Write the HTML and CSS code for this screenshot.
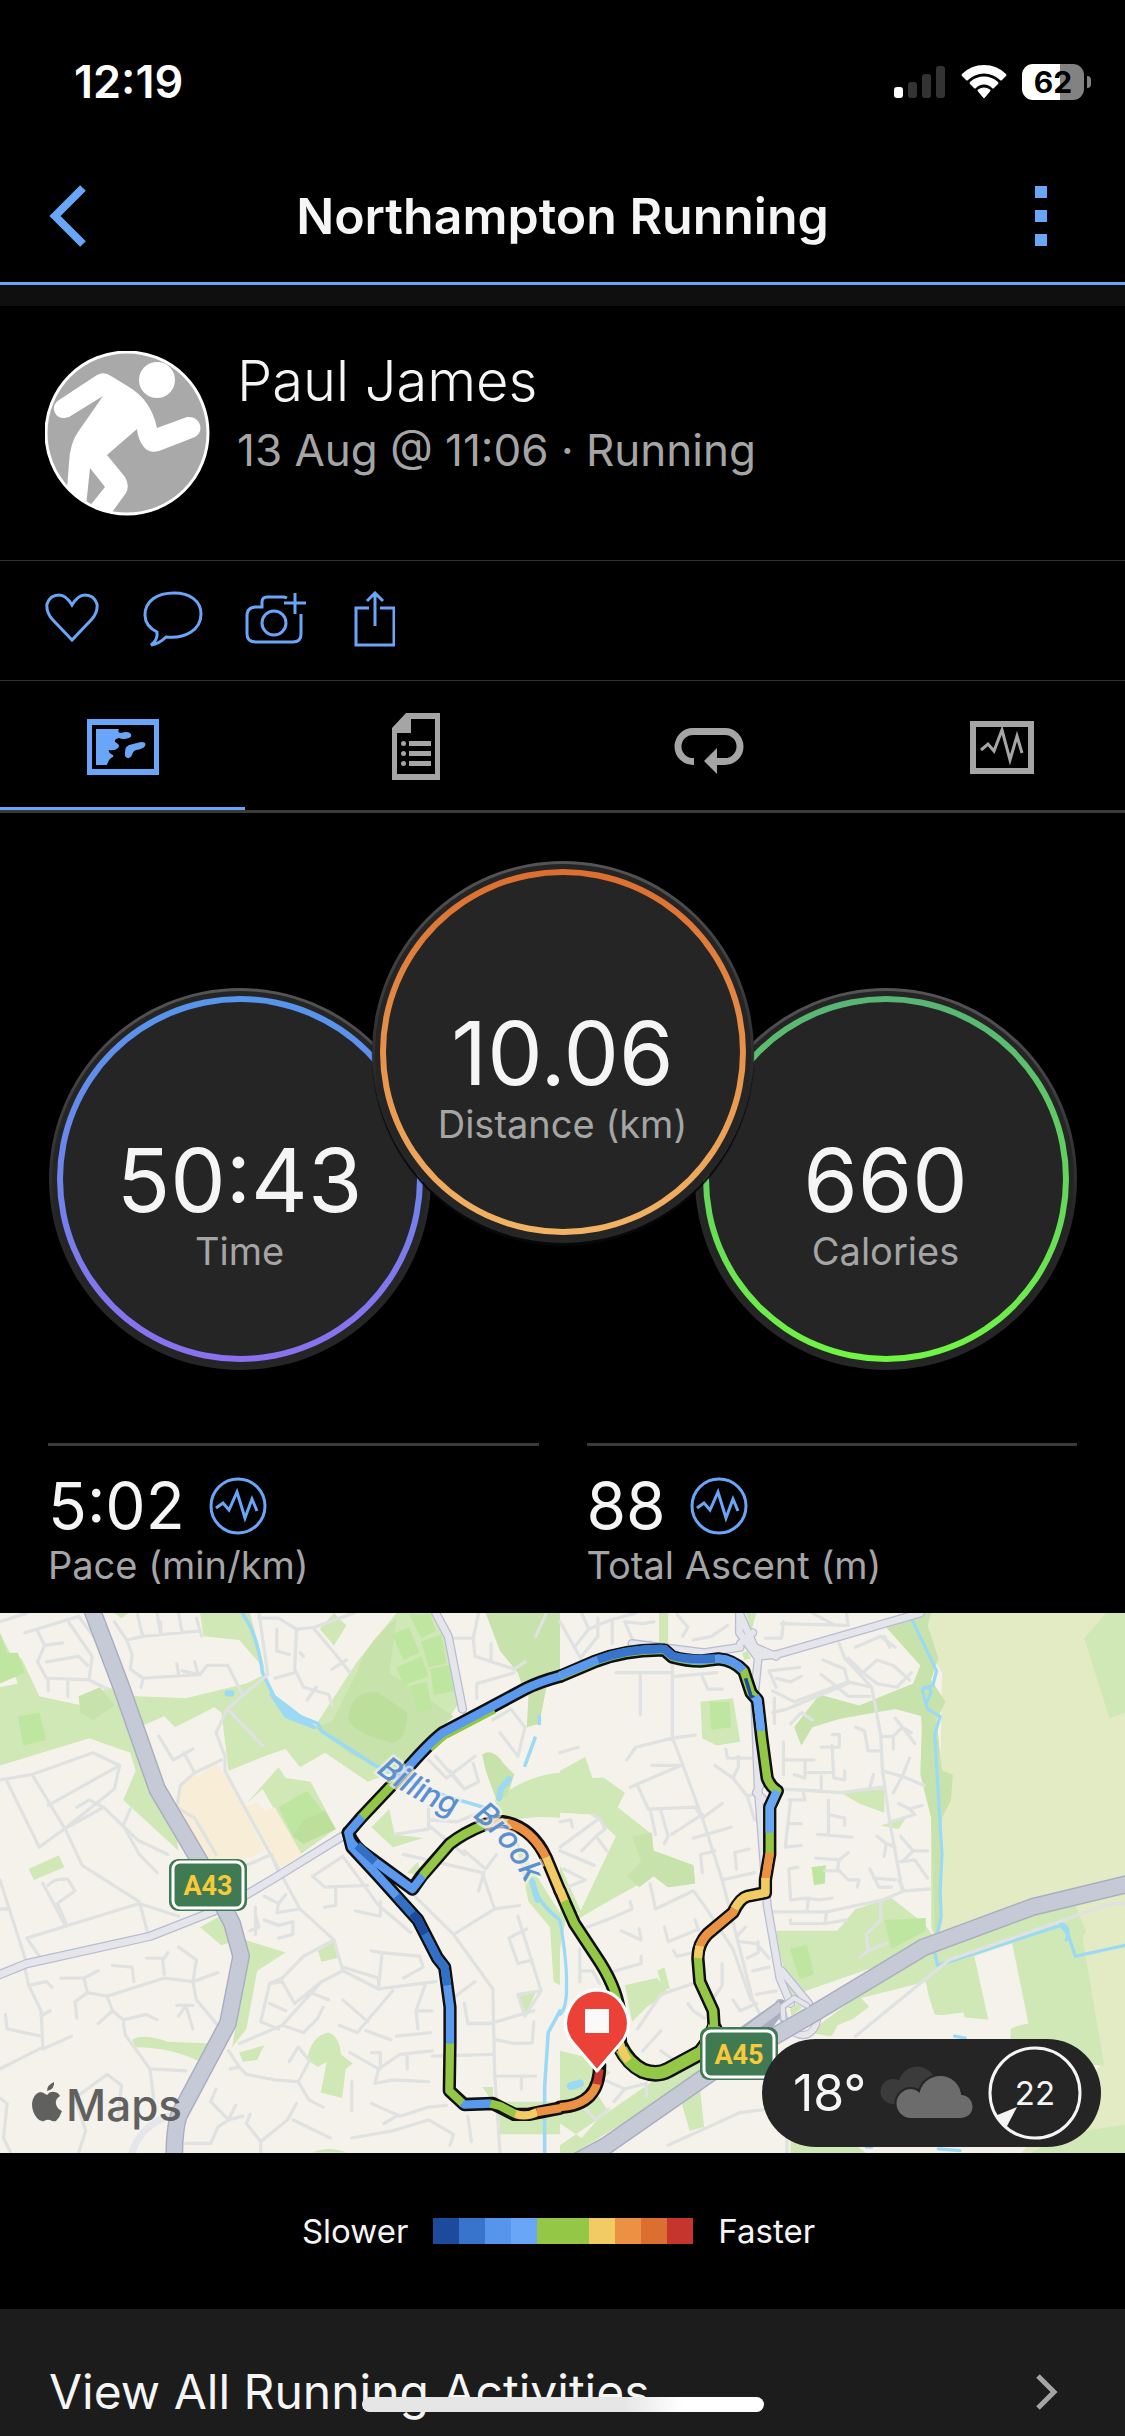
FILE: index.html
```html
<!DOCTYPE html>
<html lang="en">
<head>
<meta charset="utf-8">
<meta name="viewport" content="width=device-width, initial-scale=1">
<title>Northampton Running</title>
<link rel="stylesheet" href="styles.css">
</head>
<body>
<div class="status">
  <span class="clock">12:19</span>
  <div class="status-icons">
    <svg width="52" height="34" viewBox="0 0 52 34" aria-hidden="true"><rect y="22" width="9" height="11" rx="3" fill="#fff"/><g fill="#333"><rect x="14" y="17" width="9" height="16" rx="3"/><rect x="28" y="9" width="9" height="24" rx="3"/><rect x="42" y="1" width="9" height="32" rx="3"/></g></svg>
    <svg width="46" height="34" viewBox="0 0 46 34" fill="#fff" aria-hidden="true"><path d="M1 11 Q0 10 1 9 Q10 0 23 0 Q36 0 45 9 Q46 10 45 11 L41 15 Q40 16 39 15 Q32 8.500 23 8.500 Q14 8.500 7 15 Q6 16 5 15Z"/><path d="M9 19 Q8 18 9 17 Q15 11.500 23 11.500 Q31 11.500 37 17 Q38 18 37 19 L33 23 Q32 24 31 23 Q28 19.500 23 19.500 Q18 19.500 15 23 Q14 24 13 23Z"/><path d="M17 26.500 Q16 25.500 17 24.500 Q20 22.500 23 22.500 Q26 22.500 29 24.500 Q30 25.500 29 26.500 L23.500 33 Q23 33.500 22.500 33Z"/></svg>
    <div class="battery"><span class="battery-level">62</span></div>
  </div>
</div>

<header class="topbar">
  <button class="icon-button" aria-label="Back"><svg width="38" height="62" viewBox="0 0 38 62"><path d="M35 3 L7 31 L35 59" fill="none" stroke="#6aa6f8" stroke-width="8"/></svg></button>
  <h1>Northampton Running</h1>
  <button class="icon-button menu" aria-label="More options"><svg width="12" height="60" viewBox="0 0 12 60" fill="#6aa6f8"><path d="M0 0h12v12H0zM0 24h12v12H0zM0 48h12v12H0z"/></svg></button>
</header>
<div class="strip"></div>

<main>
<section class="profile">
  <svg class="avatar" viewBox="0 0 165 165" aria-hidden="true">
    <defs><clipPath id="disc"><circle cx="82" cy="82" r="80"/></clipPath></defs>
    <circle cx="82" cy="82" r="81" fill="#a9a9a9"/>
    <g clip-path="url(#disc)" fill="#fff">
      <ellipse cx="112" cy="29" rx="18" ry="18"/>
      <path d="M52 24Q59 20 66 25L84 36Q106 49 112 77L142 66Q152 65 155 74Q157 82 150 86L114 100Q104 103 98 95Q93 88 92 78L62 104L80 126Q85 134 81 142L62 168L44 156L60 136L45 117L40 165H20L24 112Q25 92 33 81L58 45L24 66Q12 70 9 59Q8 53 14 49Z"/>
    </g>
    <circle cx="82" cy="82" r="81" fill="none" stroke="#fff" stroke-width="3"/>
  </svg>
  <div class="who"><h2>Paul James</h2><p>13 Aug @ 11:06 · Running</p></div>
</section>

<div class="actions">
  <button aria-label="Like"><svg width="56" height="56" viewBox="0 0 56 56"><path d="M27 49 L7 28 Q1 21 2 13 Q5 4 14 4 Q21 4 27 14 Q33 4 40 4 Q49 4 52 13 Q53 21 47 28Z"/></svg></button>
  <button aria-label="Comment"><svg width="60" height="56" viewBox="0 0 60 56"><path d="M14 41 Q2 35 2 24 C2 10 14 2 31 2 C47 2 58 10 58 23 C58 39 42 48 23 46 Q16 53 8 54 Q15 49 14 41Z"/></svg></button>
  <button aria-label="Add photo"><svg width="66" height="56" viewBox="0 0 66 56"><path d="M42 7 Q40 6 38 6 H22 Q17 6 17 11 V16 H11 Q2 16 2 25 V43 Q2 51 11 51 H48 Q56 51 56 43 V23"/><circle cx="29" cy="32" r="12"/><path d="M50 2 V23 M39 12 H61"/></svg></button>
  <button aria-label="Share"><svg width="42" height="56" viewBox="0 0 42 56"><path d="M16 17 H3 V54 H41 V17 H27 M22 2 V35 M14 10 L22 2 L30 10"/></svg></button>
</div>

<nav class="tabs">
  <button class="tab active" aria-label="Map"><svg width="72" height="68" viewBox="0 0 72 68" fill="#6aa6f8"><path d="M0 6H72V62H0ZM5 12V56H67V12Z" fill-rule="evenodd"/><path d="M9 16H32Q30 20 34 20Q40 18 43 20Q46 23 42 25Q36 27 32 25Q27 26 28 29Q34 32 31 35Q28 38 22 37Q21 39 24 41Q29 43 24 45Q21 47 20 52H9Z"/><path d="M38 40Q37 32 46 31L54 29Q60 29 58 33Q56 36 49 37Q46 38 45 42Q42 48 38 43Z"/></svg></button>
  <button class="tab" aria-label="Details"><svg width="50" height="68" viewBox="0 0 50 68" fill="#a5a5a5"><path d="M15 0H49V67H1V15ZM20 6V20H6V61H44V6Z" fill-rule="evenodd"/><path d="M18 28h22v5H18zM18 38h22v5H18zM18 48h22v5H18z"/><circle cx="12.500" cy="30.500" r="2.500"/><circle cx="12.500" cy="40.500" r="2.500"/><circle cx="12.500" cy="50.500" r="2.500"/></svg></button>
  <button class="tab" aria-label="Laps"><svg width="70" height="68" viewBox="0 0 70 68"><path d="M20 48.500H19A15 15 0 0 1 19 18.500H51A15 15 0 0 1 51 48.500H41" fill="none" stroke="#a5a5a5" stroke-width="7"/><path d="M30 48L43 35V61Z" fill="#a5a5a5"/></svg></button>
  <button class="tab" aria-label="Charts"><svg width="64" height="68" viewBox="0 0 64 68" fill="none" stroke="#a5a5a5"><rect x="3" y="11" width="58" height="47" stroke-width="6"/><path d="M11 37L18 31L24 38L32 17L40 47L47 23L52 40" stroke-width="3"/></svg></button>
</nav>

<section class="rings">
  <div class="dial time"><div class="ring"><strong>50:43</strong><span>Time</span></div></div>
  <div class="dial distance"><div class="ring"><strong>10.06</strong><span>Distance (km)</span></div></div>
  <div class="dial calories"><div class="ring"><strong>660</strong><span>Calories</span></div></div>
</section>

<section class="stats">
  <div class="stat"><div class="stat-value"><strong>5:02</strong><button aria-label="Pace chart"><svg width="58" height="58" viewBox="0 0 58 58" fill="none" stroke="#6aa6f8" stroke-width="3"><circle cx="29" cy="29" r="27"/><path d="M7 31L14 26L20 33L28 15L36 41L43 22L48 34"/></svg></button></div><p>Pace (min/km)</p></div>
  <div class="stat"><div class="stat-value"><strong>88</strong><button aria-label="Ascent chart"><svg width="58" height="58" viewBox="0 0 58 58" fill="none" stroke="#6aa6f8" stroke-width="3"><circle cx="29" cy="29" r="27"/><path d="M7 31L14 26L20 33L28 15L36 41L43 22L48 34"/></svg></button></div><p>Total Ascent (m)</p></div>
</section>

<section class="map">
<svg class="map-canvas" viewBox="0 0 1125 540" role="img" aria-label="Route map">
  <defs><path id="brook1" d="M376 159 Q410 188 462 206"/><path id="brook2" d="M472 204 Q508 230 532 284"/></defs>
  <rect width="1125" height="540" fill="#f5f2eb"/>
  <!-- western half -->
  <g transform="matrix(.35714 0 0 .36352 0 -13)" stroke-linejoin="round" stroke-linecap="round">
    <g fill="#cfe8b5">
      <path d="M0 90L30 150L60 160L110 265L230 290L300 240L380 265L520 270L690 230L750 200L670 110L570 100L560 36H700L760 260L880 350L1000 170L1110 36H1220L1300 260L1240 350L1110 470L1030 500L910 420L840 460L800 410L740 430L640 470L620 310L600 295L490 350L460 320L400 345L420 420L480 560L500 690L345 550L380 470L365 420L250 380L0 455V240L50 230Z"/>
      <path d="M320 36H360L340 50ZM895 80L935 36L970 70L935 125ZM80 740L165 702L180 735L95 770ZM690 560L780 460L800 490L870 500L940 630L840 700L735 520ZM560 900L615 870L650 940L620 950ZM670 930L800 970L720 1020L690 1180L650 1230L690 1000ZM370 1210Q400 1190 470 1215L590 1220L560 1270Q480 1230 380 1230ZM530 1310L570 1290L500 1400ZM670 1245L740 1225L720 1265L680 1270ZM860 1265Q870 1200 920 1190Q950 1200 955 1250L988 1275L968 1290L958 1370L898 1355L915 1270L890 1285ZM890 965L935 940L945 985L900 995ZM875 1520Q920 1500 970 1520ZM1040 625L1090 575L1105 645L1185 655L1100 680ZM1140 750L1170 720L1180 760ZM1450 1090L1500 1080L1470 1145ZM1395 1380H1568V1470H1400ZM1350 1340H1380V1380Z"/>
      <path d="M1385 550Q1480 480 1568 475V600Q1500 590 1410 610ZM1440 650Q1500 760 1568 860V1060L1550 1050L1540 900L1480 830Z"/>
    </g>
    <g fill="#c7e2ab">
      <path d="M1000 200Q1020 120 1110 50L1090 200L1270 320L1100 470L990 430L880 350L930 335ZM1360 36H1568V220L1470 260L1450 200L1400 140ZM220 265L280 240L320 290L260 330L225 310ZM1480 260L1530 240L1510 340L1475 350ZM1350 425Q1380 405 1410 450L1440 480L1420 540L1390 550L1360 470Z"/>
    </g>
    <g fill="#bfe6a0"><path d="M0 90L20 145L50 145L70 200L0 230ZM50 320L110 310L130 385L65 400ZM1098 95L1145 75L1175 145L1130 165ZM1145 40H1205L1220 85L1180 105ZM1180 115L1235 95L1250 175L1200 185ZM1110 185L1180 155L1200 210L1130 235ZM1150 235L1195 225L1210 300L1170 308ZM1205 190L1260 178L1270 250L1215 262ZM780 570L860 525L940 630L850 670L820 650Z"/></g>
    <path d="M980 300Q1000 245 1060 255L1140 310Q1140 380 1100 393Q1000 370 975 330ZM850 605L910 580L940 630L850 670L820 650Z" fill="#bcdf9c"/>
    <g fill="#f8edd6"><path d="M500 510Q510 490 560 480L605 450L650 510L740 690L650 730L560 700L500 580ZM690 570L720 555L740 580L770 570L845 700L780 740Z"/></g>
    <g fill="none" stroke="#9bd9f5" stroke-width="10">
      <path d="M678 36Q720 90 735 200L770 270"/><path d="M760 260L800 320L880 350L840 320Z" fill="#9bd9f5"/><path d="M840 320L890 340L900 360L1050 455L1250 540L1370 575"/>
      <path d="M1510 320V340M1498 380L1470 455M1490 770Q1500 830 1568 880M1568 1130L1535 1190L1525 1340V1521"/><path d="M637 257H648M1425 493L1402 520L1398 545M1490 775L1505 825" stroke-width="17"/>
    </g>
    <g fill="none" stroke="#dfe2e1" stroke-width="9">
      <path d="M0 60L75 36M70 90L220 45L300 150M105 85L125 125L105 170L130 215L250 220L300 245M125 125L175 118M130 170L220 155L245 180M188 55L258 155L250 215M135 215V250M190 220V265"/>
      <path d="M320 60L355 110L400 100L560 85M355 110L370 150L365 190L400 215L560 205L580 180H638L680 262L750 205L725 36M385 40L400 100M440 36L450 95M500 36L510 90M550 50L565 100M400 220L395 240M495 175L500 205M545 170L555 205M510 195L560 205M450 60V90"/>
      <path d="M725 50L780 50L830 80L880 75L990 36M775 80V140L810 150M830 85L825 190L850 240L920 260L930 290M880 80L940 150L980 200M770 215L825 200M840 145L850 155M930 190L970 165M885 240L860 275"/>
      <path d="M637 300L735 400M680 262L637 300L605 365L630 430V470L690 580L780 740M445 375L485 440L540 410M515 420L545 475L620 440M545 475L505 510L495 570L545 600L605 700"/>
      <path d="M0 495L90 480L260 420L335 455L320 520L180 630L110 680L20 500M90 480L185 635L230 730L390 830L415 920M135 565L335 455M180 630L290 570L385 660L470 700M290 570L250 550L215 570M345 620L365 575M345 620L390 700L440 750M180 890L120 780M75 930L390 835L500 870M135 785Q150 765 190 768L210 800L160 835L185 890M0 770L75 1000M0 850L20 850M75 930L110 980M690 730L760 700L780 750"/>
      <path d="M790 760L840 850L935 935L960 1020L1060 1070L1220 1050M740 815L780 835L800 810M780 835L775 860L840 850M715 865L725 900L700 910M740 880L780 895L820 885M715 845V920M820 885V920L780 930M875 760L960 705L1060 840L1150 915M875 760L910 790L1030 785M940 790V840L910 845M995 855L1065 870V830"/>
      <path d="M1115 770L1270 920L1380 1070L1385 1300L1400 1521M1130 700L1350 750L1385 850L1270 920M1200 570V630L1105 645M1200 605L1280 610L1355 580M1220 430L1300 520L1340 500L1325 450M1200 440L1250 490L1330 430M1300 520L1260 470M1300 690L1360 740L1390 700M1355 750L1340 800M1385 850L1455 840M1450 870L1515 1075L1450 1085L1470 1145L1515 1075M1475 905L1425 930L1450 1000L1490 990M1300 700L1250 660L1200 620"/>
      <path d="M70 1015L80 1060L115 1130L120 1230L0 1290M80 1060L130 1050L145 1065M115 1145L140 1130M120 1235L200 1200M15 1140L20 1180L115 1200M170 1040H235L245 1080L210 1105L215 1150M245 1080L300 1090L460 1040L540 1050L610 1025M235 1040L275 1020M300 1090L315 1130L275 1165M315 1130L345 1155L410 1140L440 1155M345 1155L350 1195L420 1290L430 1370M420 1290L520 1295M315 1005L370 1010L375 1050M410 985L455 985L460 1030M460 985L470 970M500 955L550 990L540 1050L550 1100L610 1170M495 1115L540 1115M520 1115L500 1145M520 1115L540 1180"/>
      <path d="M960 1020L900 1050L790 1170L670 1220M935 935L850 980L790 1040L755 1055L730 1160L780 1180M755 1055L790 1050L825 1110L900 1050M755 1110L800 1130M870 1080L920 1100M790 1170L850 1190L890 1150L905 1120M960 1100L1030 1160M1060 1070V1040L960 1010M1040 965L1070 970L1175 980L1185 1010L1130 1040M1070 970L1060 1065M980 1245L1060 1290L1120 1250L1210 1240M1060 1290L1050 1330L1100 1320L1200 1325M1140 1250V1290M1040 1245H1065V1290M1110 1200L1205 1190M1025 1185L1095 1210M950 1170L1000 1190L1100 1075M1190 1060L1165 1130L1170 1180M1165 1130H1210"/>
      <path d="M640 1240L670 1285L690 1305L770 1320L835 1325L865 1375M670 1285L645 1290M810 1270L835 1230L865 1265M835 1325L865 1270M605 1345L590 1380L640 1430L610 1450L590 1495H520M640 1430L680 1420M660 1390L640 1430M690 1440L730 1490L805 1430L830 1385M690 1440L700 1415M730 1490V1521M820 1430L925 1480M865 1375L905 1395M985 1325L985 1405M1040 1385L1120 1420L1200 1395L1250 1390M985 1480L1100 1460L1200 1430L1270 1470L1260 1500M1110 1420L1075 1440M1310 1420L1320 1490M0 1370L20 1385L10 1480L30 1521M210 1370L300 1305L340 1335L330 1430M210 1370L240 1460L220 1521M1300 1110L1310 1165H1380M1385 1250L1210 1255M1330 1050L1275 1090M1385 1310H1500M1460 1310V1345M1390 1210L1440 1220L1490 1218L1495 1160M1390 1160L1495 1130"/>
      <path d="M1255 105H1325L1330 155L1440 190L1470 170M1325 105L1340 36M1375 120V170M1335 270V230L1440 200M1380 330L1430 300L1470 350L1450 430L1400 365M1530 36L1500 100"/>
    </g>
    <g fill="none" stroke="#babcd0" stroke-width="26"><path d="M0 1030L75 1000L420 925L640 840L785 755L975 640M1220 36L1255 100L1295 300" /></g>
    <g fill="none" stroke="#e5e5ec" stroke-width="19"><path d="M0 1030L75 1000L420 925L640 840L785 755L975 640M1220 36L1255 100L1295 300M370 1521Q390 1450 470 1420"/></g>
    <g fill="none" stroke="#a9adc2" stroke-width="50" stroke-linecap="butt"><path id="a43" d="M255 20L340 240L440 520L560 720L650 890L675 980L638 1165L500 1420Q488 1460 488 1530"/></g>
    <use href="#a43" fill="none" stroke="#c6cad6" stroke-width="42"/>
  </g>
  <!-- eastern half -->
  <g transform="matrix(.36033 0 0 .36352 560 -13)" stroke-linejoin="round" stroke-linecap="round">
    <path d="M970 36H1568V1521H1280L1500 1280L1040 1010L1055 500L1060 200Z" fill="#e2ebc3"/>
    <g fill="#cfe8b5">
      <path d="M0 470L70 432L90 490L120 488L180 530L160 570L250 640L260 690L370 730L375 780L300 790L260 760L150 820L45 880L155 650L90 590L0 585ZM390 280L480 270L500 390L435 400L395 380ZM0 730L60 860H20L0 960ZM720 260L800 295L930 270L1040 230V930L1030 900V600L1000 310L930 300L820 320L700 340L670 400L650 350L710 310ZM600 910L770 910L820 850L920 820L1010 890L1040 930L900 1000L640 1090L610 970ZM1060 920L1430 840L1460 910L1450 930L1510 1280H1250V1180L1295 1160L1250 940L1150 980L1190 1155L1040 1140L1010 1050L870 1110L750 1200L690 1190ZM180 1060L270 1040L300 1080L240 1120L200 1160ZM270 1020L290 1010L305 1070H285ZM275 36H300V130L275 120ZM0 1240L80 1260L140 1300L90 1340L130 1400L60 1480L0 1440ZM330 1360L385 1310L400 1450L360 1460ZM380 1240L0 1500V1521H40L420 1290ZM515 36H545L530 90ZM890 620L960 600L940 630ZM780 530L900 520V585L830 560Z"/>
      <path d="M1455 105L1515 36H1568V310L1525 325ZM1310 1521Q1400 1460 1568 1445V1521ZM640 1521V1480L820 1500L850 1521Z"/>
    </g>
    <g fill="#c7e2ab"><path d="M905 75L975 36H1030L1020 70L1050 160L1030 220L1070 280L1045 330L1060 470L1090 480L1085 550L1060 600L1055 900L1040 920L1030 600L1000 480L1005 320L930 300L800 320L700 350L670 400L650 350L720 260L830 290L980 230L1000 180ZM185 760L225 720L200 650L255 640L260 690L370 730L375 780L300 790L260 760L220 790Z"/></g>
    <g fill="#bfe6a0"><path d="M415 280H470L475 350L420 357ZM638 960L685 948L705 1030L665 1043ZM900 880L1015 875V910L920 960ZM698 735L738 730L735 780L705 785Z"/></g>
    <path d="M835 1095L1015 1050L1035 1145L1120 1135L1130 1175L1190 1160L1150 980L1255 945L1300 1165L1250 1175V1220H820L830 1150L755 1200L770 1170L870 1130Z" fill="#f5f2eb"/>
    <g fill="none" stroke="#9bd9f5" stroke-width="9">
      <path d="M975 50L1045 195L1035 235L1005 245L1020 300L1055 320L1040 370L1060 700L1055 800L1058 870L1045 930L1040 970L1048 1005L1390 895L1410 920L1430 980L1568 950M1010 240Q1045 235 1015 285M1390 890Q1420 900 1405 935M0 880Q20 1000 18 1060Q20 1120 0 1140M850 1505H865M1050 1510L1110 1515M1095 1200L1125 1205"/><path d="M30 1337L55 1330" stroke-width="22"/>
    </g>
    <g fill="none" stroke="#dfe2e1" stroke-width="9">
      <path d="M0 60L40 130L80 80L140 55L210 36M80 80L60 36M40 130L60 165M105 50V100L60 155M145 60V120M180 60L230 65L260 60M180 60L210 130L250 115M325 40L355 75L340 100M370 110L420 100L465 70M570 105H615L620 60M615 65L800 70L795 36M700 36L755 65"/>
      <path d="M155 200H310M223 200V315M312 170V380L330 425L395 600L450 770L535 1100L560 1150M320 210L435 200M395 210L410 245H450M185 440L210 405L312 380L375 372M195 515L335 455L255 455M215 510L245 575L375 570L395 600L450 560M250 575L265 645M280 580L300 650L290 670M310 645L395 590M370 655L475 625M0 420L50 405M460 410L465 435H530M495 430V460L480 490M430 455L480 490L520 540L550 530M520 540L540 605"/>
      <path d="M580 195L665 185M600 215L640 225L670 210M580 195L600 240M590 250L650 280L800 225L865 240M590 310L630 300L800 230L790 190L730 165M725 205L770 240L800 265H860M800 160L840 200L880 165L925 180L970 220M840 200L880 230L935 240L975 200M820 130L890 100L930 130M900 100L915 130M775 120L790 160L865 240L890 370L895 470L915 610L950 800M595 270V340M640 340L670 310L700 330"/>
      <path d="M620 390V480M620 440L705 440M680 440V490L650 480M690 475H755M755 400L760 490L790 495V470M725 485V525L620 520M755 370H775V405H725M820 350L845 360L855 415H890M895 375H925V410M925 375L950 350L985 395M930 325L950 350L975 365M895 470L950 485L970 435M950 485L1010 510M950 485L925 530M620 520L780 530L895 515M870 480L860 515M635 550H680L675 530M640 550L625 680M635 615H670M625 680L670 675M745 550V640M745 590L790 600V620M715 645L810 652M915 610L985 590L970 575L1005 565M940 560L970 575M880 650L905 670L900 705M905 670L930 680M945 650L980 690H1020M980 690L950 720M945 720L985 715L1020 765"/>
      <path d="M635 740L660 735M635 740L640 825L680 820L720 825L755 820M690 820L685 855M710 710L775 715L800 695M775 715L770 740L800 770H830L825 790M735 745L770 745M860 740L885 790L920 790M870 765L930 770M940 770L955 800L1025 795M590 858H740L895 825L955 800M740 858L735 890M640 880V890H735L795 880M890 830V880L850 920L855 965L830 985M855 965L905 945"/>
      <path d="M250 780L265 850L370 800L400 840L480 960L530 1100M290 900L300 940L385 905M385 910L375 880M170 910L225 935L220 905M120 1030L225 1000V980M315 965L325 980L370 970M450 1000V1060L430 1090M450 770L540 750M485 695L490 740M485 695L525 685M395 750L390 700L430 690M515 900L490 925M500 940L545 945L580 985M550 940V970L520 985M535 1020L580 1010M545 1085L600 1075M480 1100L500 1130L545 1110"/>
      <path d="M55 960V1050M55 1020H90L110 1055M75 900L130 880L200 850L195 830M0 690L95 730M0 610L30 605L35 625M0 680L110 600L125 630L100 650L60 690M105 600L90 590M100 650L130 690M10 740L70 770L20 790M215 1180L280 1085L400 1045M230 1240L280 1185M355 1110L370 1130L400 1150M280 1240L350 1290M100 1310L180 1345L240 1330V1365M180 1345L150 1380M70 1400L100 1430L135 1400M300 1500L500 1410L580 1400M630 1450V1521M820 1200L1080 990L1530 835H1568"/>
    </g>
    <g fill="none" stroke="#babcd0" stroke-width="25"><path id="eastroads" d="M498 30V90L550 160L540 260L550 520L575 840L610 1040L640 1110M500 120L535 90M550 155L600 150L760 105L1000 36M498 36L540 130L600 155M200 120L400 145L500 130M555 510L545 530L565 550M615 1020L690 1110M610 1110L620 1150"/></g>
    <use href="#eastroads" fill="none" stroke="#e5e5ec" stroke-width="18"/>
    <path d="M650 1190Q690 1210 710 1170L715 1150" fill="none" stroke="#babcd0" stroke-width="22"/>
    <path d="M650 1190Q690 1210 710 1170L715 1150" fill="none" stroke="#e5e5ec" stroke-width="16"/>
    <g fill="none" stroke="#a9adc2" stroke-width="50"><path id="a45" d="M0 1570L130 1500L420 1300L700 1140L1010 955L1310 845L1580 780"/><path d="M560 1190L615 1115L500 1195" stroke-width="32" stroke-linecap="butt"/></g>
    <use href="#a45" fill="none" stroke="#c6cad6" stroke-width="42"/>
    <path d="M500 1200L615 1116" stroke="#c6cad6" stroke-width="26" stroke-linecap="butt"/>
    <path d="M620 1150L618 1118L650 1095L685 1115" fill="none" stroke="#babcd0" stroke-width="18"/>
    <path d="M620 1150L618 1118L650 1095L685 1115" fill="none" stroke="#e5e5ec" stroke-width="12"/>
    <path d="M505 145L520 142L530 160L512 165ZM638 1125L660 1108L672 1122L642 1145Z" fill="#cfe8b5"/>
  </g>
  <!-- route outline -->
  <g transform="matrix(.35714 0 0 .36352 0 -13)" fill="none" stroke="#101010" stroke-width="37" stroke-linejoin="round" stroke-linecap="round">
    <path d="M1568 210Q1510 225 1470 245L1350 308L1240 365Q1200 395 1130 475L1010 600L975 640L985 680L1060 760L1170 880L1225 985L1245 1010L1260 1120V1220L1258 1350L1300 1388L1380 1385L1440 1415H1480L1568 1398"/>
    <path d="M975 640Q990 680 1030 705L1155 795L1180 760L1260 670Q1300 640 1350 620Q1380 608 1410 610Q1490 625 1530 710L1568 800"/>
  </g>
  <g transform="matrix(.36033 0 0 .36352 560 -13)" fill="none" stroke="#101010" stroke-width="37" stroke-linejoin="round" stroke-linecap="round">
    <path d="M0 210L100 168Q190 135 290 138L312 157Q350 168 390 168L440 162Q480 165 510 195L530 255L548 275L560 380L575 490Q585 515 603 525L582 570V700L575 740L570 770V805L520 815Q500 820 480 860L410 918Q380 950 383 990L388 1050L425 1130L428 1180"/>
    <path d="M428 1180Q420 1210 390 1245L300 1293Q270 1310 230 1295Q190 1275 165 1225" stroke-width="46"/>
    <path d="M0 800L40 890L100 980Q155 1060 165 1130L168 1220M0 1395Q110 1390 110 1280"/>
  </g>
  <!-- route pace colours -->
  <g transform="matrix(.35714 0 0 .36352 0 -13)" fill="none" stroke-width="23" stroke-linejoin="round">
    <path d="M1383 301L1243 373L1203 407" stroke="#93c745"/>
    <path d="M1570 209Q1510 225 1470 245L1350 308L1240 365Q1200 395 1130 475" stroke="#5b99ee" stroke-linecap="round"/>
    <path d="M1130 475L1010 600" stroke="#93c745"/>
    <path d="M1108 498L1150 452" stroke="#5b99ee"/>
    <path d="M1260 1222V1120L1245 1010L1225 985L1170 880L1060 760L985 680L975 640L1014 596" stroke="#5b99ee"/>
    <path d="M1110 815L1170 880L1225 985L1245 1010L1252 1060" stroke="#3270c8"/>
    <path d="M1155 862L1170 880L1190 918" stroke="#1c4a9c"/>
    <path d="M1260 1220L1258 1350L1296 1385" stroke="#93c745"/><path d="M1294 1384L1300 1388L1375 1385" stroke="#5b99ee"/><path d="M1373 1385L1400 1392L1445 1415" stroke="#93c745"/><path d="M1443 1414Q1475 1424 1505 1408" stroke="#f2cb64"/><path d="M1503 1409L1570 1398" stroke="#ec9144"/>
    <path d="M980 660Q990 680 1030 705L1155 795L1185 757" stroke="#5b99ee"/><path d="M1000 675L1050 720" stroke="#3270c8"/>
    <path d="M1183 758L1260 670Q1300 640 1355 619" stroke="#93c745"/><path d="M1353 620Q1380 607 1422 614" stroke="#e8c9a0"/><path d="M1420 613Q1490 630 1530 710" stroke="#ec9144"/><path d="M1529 708L1569 802" stroke="#f2cb64"/>
  </g>
  <g transform="matrix(.36033 0 0 .36352 560 -13)" fill="none" stroke-width="23" stroke-linejoin="round">
    <path d="M0 210L100 168Q190 135 290 138L312 157Q350 168 390 168L440 162Q480 165 510 195L530 255L548 275L560 380L575 490Q585 515 603 525L582 570V700L575 740L570 770V805L520 815Q500 820 480 860L410 918Q380 950 383 990L388 1050L425 1130L428 1180" stroke="#93c745"/>
    <path d="M0 208L100 166Q190 133 290 135L312 154Q350 165 390 166L440 161Q480 163 508 193" stroke="#5b99ee"/>
    <path d="M105 164Q190 133 290 135L312 154Q350 165 430 161" stroke="#3874cb"/>
    <path d="M515 215L530 265L548 272" stroke="#1c4a9c" stroke-width="10"/><path d="M541 265L548 275L558 360M602 525L582 570V640" stroke="#6aa6f8"/>
    <path d="M582 695L575 740L570 770" stroke="#ec9144"/><path d="M570 765V805L520 815Q500 820 484 850" stroke="#f2cb64"/><path d="M486 850L480 860L410 918Q392 936 386 958" stroke="#ec9144"/><path d="M387 952L383 985" stroke="#f2cb64"/>
    <path d="M428 1170Q420 1210 390 1245L300 1293Q270 1310 230 1295Q190 1275 170 1235" stroke="#93c745" stroke-width="33"/>
    <path d="M190 1268Q175 1250 165 1215" stroke="#f2cb64"/>
    <path d="M0 798L14 832" stroke="#f2cb64"/><path d="M12 828L40 890L100 980Q155 1060 165 1130" stroke="#93c745"/>
    <path d="M0 1395Q88 1388 104 1325" stroke="#ec9144"/><path d="M103 1332L110 1290" stroke="#c5352d"/>
  </g>
  <g class="brook-label"><text><textPath href="#brook1">Billing</textPath></text><text><textPath href="#brook2">Brook</textPath></text></g>
  <g><rect x="169" y="246" width="78" height="52" rx="9" fill="#407a53"/><rect x="173" y="249" width="70" height="46" rx="7" fill="none" stroke="#fff" stroke-width="3"/><text class="road-sign" x="208" y="282">A43</text></g>
  <g><rect x="700" y="414" width="78" height="53" rx="9" fill="#407a53"/><rect x="704" y="418" width="70" height="46" rx="7" fill="none" stroke="#fff" stroke-width="3"/><text class="road-sign" x="739" y="451">A45</text></g>
  <path d="M597 458L574 431Q562 418 567 401Q575 378 597 377Q619 378 627 401Q632 418 620 431Z" fill="#ec4137" stroke="#fff" stroke-width="3" stroke-linejoin="round"/><rect x="585" y="396" width="24" height="24" fill="#fafafa"/>
  <g fill="#60605e"><path d="M47 482Q50 478 54 479Q58 479 60 483Q55 486 56 491Q57 496 62 498Q60 504 56 508Q53 509 50 507Q47 506 44 508Q40 509 37 505Q32 499 32 491Q33 481 40 479Q43 479 47 482ZM47 478Q47 472 54 469Q55 476 47 478Z"/><text class="map-brand" x="66" y="508">Maps</text></g>
</svg>
<div class="weather">
  <span class="temp">18°</span>
  <svg width="94" height="54" viewBox="0 0 94 54" aria-hidden="true"><path d="M13 38A12 12 0 0 1 13 13L19 14A19 19 0 0 1 53 9L45 26L18 38Z" fill="#3b3b3b"/><path d="M31 53A15 15 0 0 1 31 22Q36 22 39 25A22 22 0 0 1 82 28A12 12 0 0 1 80 53Z" fill="#6c6c6c" stroke="#252525" stroke-width="2"/></svg>
  <div class="wind"><span>22</span><svg width="96" height="96" viewBox="0 0 96 96" aria-hidden="true"><circle cx="48" cy="48" r="45" fill="none" stroke="#f5f5f5" stroke-width="3"/><path d="M30 62L8 71L19 83Z" fill="#f5f5f5"/></svg></div>
</div>
</section>

<div class="legend"><span>Slower</span><div class="scale"><i class="c1"></i><i class="c2"></i><i class="c3"></i><i class="c4"></i><i class="c5"></i><i class="c5"></i><i class="c6"></i><i class="c7"></i><i class="c8"></i><i class="c9"></i></div><span>Faster</span></div>

<a class="view-all" href="#activities"><span>View All Running Activities</span><svg width="24" height="36" viewBox="0 0 24 36"><path d="M3 2L19 18L3 34" fill="none" stroke="#a5a5a5" stroke-width="5"/></svg></a>
</main>
<div class="home-indicator"></div>
</body>
</html>
```
FILE: styles.css
```css
* { box-sizing: border-box; margin: 0; padding: 0; }
body { background: #000; color: #f5f5f5; font-family: Inter, "Liberation Sans", sans-serif; }
button { background: none; border: 0; color: inherit; font: inherit; }
svg { display: block; }

.status { display: flex; justify-content: space-between; height: 150px; padding: 64px 34px 0 74px; }
.clock { font-size: 45px; line-height: 36px; font-weight: 600; color: #fff; }
.status-icons { display: flex; gap: 15px; height: 36px; align-items: center; }
.battery { position: relative; width: 62px; height: 36px; margin-right: 7px; border-radius: 11px; background: linear-gradient(90deg, #fff 62%, #828282 62%); color: #000; text-align: center; }
.battery::after { content: ""; position: absolute; right: -7px; top: 12px; width: 4px; height: 12px; border-radius: 0 4px 4px 0; background: #828282; }
.battery-level { font-size: 30px; line-height: 36px; font-weight: 700; }

.topbar { display: flex; align-items: center; justify-content: space-between; height: 135px; padding: 0 48px; border-bottom: 3px solid #6aa6f8; }
.topbar h1 { font-size: 50px; line-height: 60px; font-weight: 600; }
.icon-button { display: flex; width: 60px; }
.menu { justify-content: center; padding-right: 12px; }
.strip { height: 21px; background: #0f0f0f; }

.profile { display: flex; gap: 27px; height: 255px; padding: 45px; border-bottom: 1px solid #333; }
.avatar { width: 165px; height: 165px; flex: none; }
.who h2 { font-size: 56px; line-height: 60px; font-weight: 300; }
.who p { margin-top: 9px; font-size: 44px; line-height: 60px; color: #a5a5a5; }

.actions { display: flex; align-items: center; gap: 42px; height: 120px; padding: 0 45px 3px; border-bottom: 1px solid #333; }
.actions svg { fill: none; stroke: #6aa6f8; stroke-width: 3; }

.tabs { display: flex; gap: 48px; border-bottom: 3px solid #3a3a3a; }
.tab { display: flex; flex: 1; justify-content: center; height: 129px; padding-top: 32px; border-bottom: 3px solid transparent; }
.tab.active { border-color: #6aa6f8; }
.tab svg { overflow: visible; }

.rings { display: flex; justify-content: center; padding: 48px 0 73px; }
.dial { width: 382px; height: 382px; padding: 5px; margin-top: 127px; border: 3px solid transparent; border-radius: 50%; background: linear-gradient(#252525, #252525) padding-box, linear-gradient(#555, #262626 60%) border-box; }
.distance { position: relative; margin: 0 -59px 127px; box-shadow: 0 3px 1px #080808; }
.ring { display: flex; flex-direction: column; align-items: center; height: 366px; padding-top: 130px; border: 6px solid transparent; border-radius: 50%; }
.time .ring { background: linear-gradient(#252525, #252525) padding-box, linear-gradient(#5596ec, #8b70ee) border-box; }
.distance .ring { background: linear-gradient(#252525, #252525) padding-box, linear-gradient(#dc6e2f, #f2b464) border-box; }
.calories .ring { background: linear-gradient(#252525, #252525) padding-box, linear-gradient(#58b476, #70f544) border-box; }
.ring strong { font-size: 88px; line-height: 96px; font-weight: 400; }
.ring span { font-size: 38px; line-height: 46px; color: #a5a5a5; }

.stats { display: grid; grid-template-columns: 1fr 1fr; gap: 48px; padding: 0 48px; }
.stat { height: 170px; padding-top: 30px; border-top: 3px solid #3a3a3a; }
.stat-value { display: flex; align-items: center; gap: 24px; height: 60px; }
.stat strong { font-size: 64px; line-height: 60px; font-weight: 400; }
.stat p { margin-top: 5px; font-size: 38px; line-height: 48px; color: #a5a5a5; }

.map { position: relative; overflow: hidden; }
.map-canvas { width: 100%; height: auto; }
.brook-label { font-size: 31px; font-weight: 500; font-style: italic; fill: #5a90d2; stroke: #f5f2ebaa; stroke-width: 5px; paint-order: stroke; }
.road-sign { font-family: Roboto, sans-serif; font-size: 27px; font-weight: 700; fill: #f8ca38; text-anchor: middle; }
.map-brand { font-size: 44px; font-weight: 500; }
.weather { position: absolute; right: 24px; bottom: 6px; display: flex; align-items: center; justify-content: space-between; width: 339px; height: 108px; padding: 0 18px 0 31px; border-radius: 54px; background: #252525; }
.temp { font-size: 50px; line-height: 60px; }
.wind { display: grid; place-items: center; }
.wind > * { grid-area: 1 / 1; }
.wind span { font-size: 33px; line-height: 40px; }

.legend { display: flex; align-items: center; justify-content: center; gap: 25px; height: 156px; padding-right: 8px; font-size: 33px; line-height: 40px; }
.scale { display: flex; }
.scale i { width: 26px; height: 26px; }
.c1 { background: #1c4a9c; }
.c2 { background: #3874cb; }
.c3 { background: #5596ec; }
.c4 { background: #6aa6f8; }
.c5 { background: #93c745; }
.c6 { background: #f2cb64; }
.c7 { background: #ec9144; }
.c8 { background: #dc6e2f; }
.c9 { background: #c5352d; }

.view-all { display: flex; justify-content: space-between; height: 127px; padding: 53px 66px 0 49px; background: #1c1c1c; color: inherit; text-decoration: none; font-size: 48px; line-height: 60px; }
.view-all svg { margin-top: 12px; }
.home-indicator { position: fixed; bottom: 24px; left: 50%; width: 402px; height: 15px; margin-left: -201px; border-radius: 8px; background: linear-gradient(90deg, #e6e6e6 65%, #fff 80%); }
```
